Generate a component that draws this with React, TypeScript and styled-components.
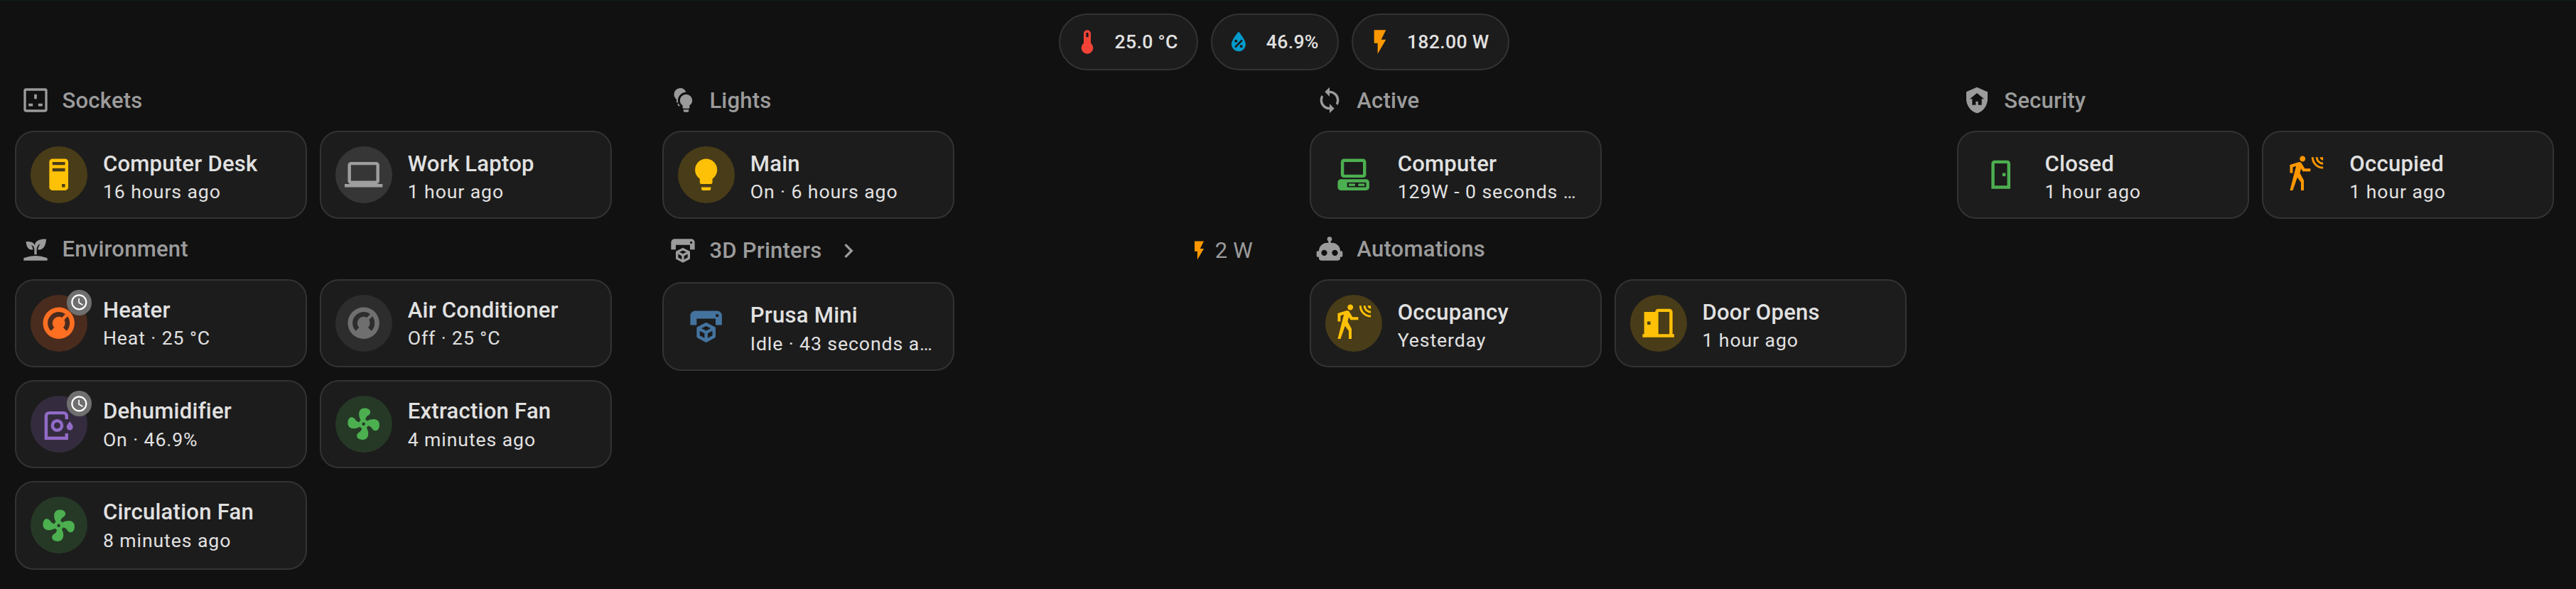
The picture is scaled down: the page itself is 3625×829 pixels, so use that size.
import React from "react";
import styled, { createGlobalStyle } from "styled-components";

const GlobalStyle = createGlobalStyle`
  * { box-sizing: border-box; }
  html, body { margin: 0; background: #111111; }
  body { font-family: Roboto, sans-serif; color: #e1e1e1; }
`;

const icons = {
  thermometer: "M15 13V5A3 3 0 0 0 9 5V13A5 5 0 1 0 15 13M12 4A1 1 0 0 1 13 5V8H11V5A1 1 0 0 1 12 4Z",
  waterPercent: "M12,3.25C12,3.25 6,10 6,14C6,17.32 8.69,20 12,20A6,6 0 0,0 18,14C18,10 12,3.25 12,3.25M14.47,9.97L15.53,11.03L9.53,17.03L8.47,15.97M9.75,10A1.25,1.25 0 0,1 11,11.25A1.25,1.25 0 0,1 9.75,12.5A1.25,1.25 0 0,1 8.5,11.25A1.25,1.25 0 0,1 9.75,10M14.25,14.5A1.25,1.25 0 0,1 15.5,15.75A1.25,1.25 0 0,1 14.25,17A1.25,1.25 0 0,1 13,15.75A1.25,1.25 0 0,1 14.25,14.5Z",
  flash: "M7,2V13H10V22L17,10H13L17,2H7Z",
  socket: "M4,2A2,2 0 0,0 2,4V20A2,2 0 0,0 4,22H20A2,2 0 0,0 22,20V4A2,2 0 0,0 20,2H4M4,4H20V20H4V4M10.9,7V11H13.1V7H10.9M6.1,14.8V17.1H9.7V14.8H6.1M14.3,14.8V17.1H17.9V14.8H14.3Z",
  tower: "M8,2H16A2,2 0 0,1 18,4V20A2,2 0 0,1 16,22H8A2,2 0 0,1 6,20V4A2,2 0 0,1 8,2M8,4V6H16V4H8M16,8H8V10H16V8M16,18H14V20H16V18Z",
  laptop: "M4,6H20V16H4M20,18A2,2 0 0,0 22,16V6C22,4.89 21.1,4 20,4H4C2.89,4 2,4.89 2,6V16A2,2 0 0,0 4,18H0V20H24V18H20Z",
  sprout: "M2,22V20C2,20 7,18 12,18C17,18 22,20 22,20V22H2M11.3,9.1C10.1,5.2 4,6.1 4,6.1C4,6.1 4.2,13.9 9.9,12.7C9.5,9.8 8,9 8,9C10.8,9 11,12.4 11,12.4V17C11.3,17 11.7,17 12,17C12.3,17 12.7,17 13,17V12.8C13,12.8 13,8.9 16,7.9C16,7.9 14,10.9 14,12.9C21,13.6 21,4 21,4C21,4 12.1,3 11.3,9.1Z",
  thermostat: "M16.95,16.95L14.83,14.83C15.55,14.1 16,13.1 16,12C16,11.26 15.79,10.57 15.43,10L17.6,7.81C18.5,9 19,10.43 19,12C19,13.93 18.22,15.68 16.95,16.95M12,5C13.57,5 15,5.5 16.19,6.4L14,8.56C13.43,8.21 12.74,8 12,8A4,4 0 0,0 8,12C8,13.1 8.45,14.1 9.17,14.83L7.05,16.95C5.78,15.68 5,13.93 5,12A7,7 0 0,1 12,5M12,2A10,10 0 0,0 2,12A10,10 0 0,0 12,22A10,10 0 0,0 22,12C22,6.47 17.5,2 12,2Z",
  dehumidifier: "M6,4A3,3 0 0,0 3,7V22H18V18H16V20H5V7A1,1 0 0,1 6,6H15A1,1 0 0,1 16,7V9H18V7A3,3 0 0,0 15,4H6M11,9A4,4 0 0,0 7,13A4,4 0 0,0 11,17A4,4 0 0,0 15,13A4,4 0 0,0 11,9M11,11A2,2 0 0,1 13,13A2,2 0 0,1 11,15A2,2 0 0,1 9,13A2,2 0 0,1 11,11M19,10.5C19,10.5 17,12.7 17,14A2,2 0 0,0 19,16A2,2 0 0,0 21,14C21,12.7 19,10.5 19,10.5Z",
  fan: "M12,11A1,1 0 0,0 11,12A1,1 0 0,0 12,13A1,1 0 0,0 13,12A1,1 0 0,0 12,11M12.5,2C17,2 17.11,5.57 14.75,6.75C13.76,7.24 13.32,8.29 13.13,9.22C13.61,9.42 14.03,9.73 14.35,10.13C18.05,8.13 22.03,8.92 22.03,12.5C22.03,17 18.46,17.1 17.28,14.73C16.78,13.74 15.72,13.3 14.79,13.11C14.59,13.59 14.28,14 13.88,14.34C15.87,18.03 15.08,22 11.5,22C7,22 6.91,18.42 9.27,17.24C10.25,16.75 10.69,15.71 10.89,14.79C10.4,14.59 9.97,14.27 9.65,13.87C5.96,15.85 2,15.07 2,11.5C2,7 5.56,6.89 6.74,9.26C7.24,10.25 8.29,10.68 9.22,10.87C9.41,10.39 9.73,9.97 10.14,9.65C8.15,5.96 8.94,2 12.5,2Z",
  clock: "M12,20A8,8 0 0,0 20,12A8,8 0 0,0 12,4A8,8 0 0,0 4,12A8,8 0 0,0 12,20M12,2A10,10 0 0,1 22,12A10,10 0 0,1 12,22C6.47,22 2,17.5 2,12A10,10 0 0,1 12,2M12.5,7V12.25L17,14.92L16.25,16.15L11,13V7H12.5Z",
  bulbs: "M14.7,7A5.2,5.2 0 0,0 9.5,12.2C9.5,14 10.4,15.6 11.8,16.5V18.3A0.7,0.7 0 0,0 12.5,19H16.9A0.7,0.7 0 0,0 17.6,18.3V16.5C19,15.6 19.9,14 19.9,12.2A5.2,5.2 0 0,0 14.7,7M12.5,20V21.3A0.7,0.7 0 0,0 13.2,22H16.2A0.7,0.7 0 0,0 16.9,21.3V20H12.5M9.7,1.8A5.2,5.2 0 0,0 4.5,7C4.5,8.8 5.3,10.3 6.6,11.3V14H8A6.9,6.9 0 0,1 14.6,5.3A5.2,5.2 0 0,0 9.7,1.8M7.6,14.8H8.3Q8.8,15.9 9.5,16.6V16.9H8.4Q7.6,16.7 7.6,15.9Z",
  bulb: "M12,2A7,7 0 0,0 5,9C5,11.38 6.19,13.47 8,14.74V17A1,1 0 0,0 9,18H15A1,1 0 0,0 16,17V14.74C17.81,13.47 19,11.38 19,9A7,7 0 0,0 12,2M9,21A1,1 0 0,0 10,22H14A1,1 0 0,0 15,21V20H9V21Z",
  printer: "M19,6A1,1 0 0,0 20,5A1,1 0 0,0 19,4A1,1 0 0,0 18,5A1,1 0 0,0 19,6M19,2A3,3 0 0,1 22,5V11H18V7H6V11H2V5A3,3 0 0,1 5,2H19M18,18.25C18,18.63 17.79,18.96 17.47,19.13L12.57,21.82C12.4,21.94 12.21,22 12,22C11.79,22 11.59,21.94 11.43,21.82L6.53,19.13C6.21,18.96 6,18.63 6,18.25V13C6,12.62 6.21,12.29 6.53,12.12L11.43,9.68C11.59,9.56 11.79,9.5 12,9.5C12.21,9.5 12.4,9.56 12.57,9.68L17.47,12.12C17.79,12.29 18,12.62 18,13V18.25M12,11.65L9.04,13L12,14.6L14.96,13L12,11.65M8,17.66L11,19.29V16.33L8,14.71V17.66M16,17.66V14.71L13,16.33V19.29L16,17.66Z",
  chevron: "M8.59,16.58L13.17,12L8.59,7.41L10,6L16,12L10,18L8.59,16.58Z",
  sync: "M12,18A6,6 0 0,1 6,12C6,11 6.25,10.03 6.7,9.2L5.24,7.74C4.46,8.97 4,10.43 4,12A8,8 0 0,0 12,20V23L16,19L12,15M12,4V1L8,5L12,9V6A6,6 0 0,1 18,12C18,13 17.75,13.97 17.3,14.8L18.76,16.26C19.54,15.03 20,13.57 20,12A8,8 0 0,0 12,4Z",
  desktop: "M6,2C4.89,2 4,2.89 4,4V12C4,13.11 4.89,14 6,14H18C19.11,14 20,13.11 20,12V4C20,2.89 19.11,2 18,2H6M6,4H18V12H6V4M4,15C2.89,15 2,15.89 2,17V20C2,21.11 2.89,22 4,22H20C21.11,22 22,21.11 22,20V17C22,15.89 21.11,15 20,15H4M8,17H20V20H8V17M9,17.75V19.25H13V17.75H9M15,17.75V19.25H19V17.75H15Z",
  robot: "M12,2A2,2 0 0,1 14,4C14,4.74 13.6,5.39 13,5.73V7H14A7,7 0 0,1 21,14H22A1,1 0 0,1 23,15V18A1,1 0 0,1 22,19H21V20A2,2 0 0,1 19,22H5A2,2 0 0,1 3,20V19H2A1,1 0 0,1 1,18V15A1,1 0 0,1 2,14H3A7,7 0 0,1 10,7H11V5.73C10.4,5.39 10,4.74 10,4A2,2 0 0,1 12,2M7.5,13A2.5,2.5 0 0,0 5,15.5A2.5,2.5 0 0,0 7.5,18A2.5,2.5 0 0,0 10,15.5A2.5,2.5 0 0,0 7.5,13M16.5,13A2.5,2.5 0 0,0 14,15.5A2.5,2.5 0 0,0 16.5,18A2.5,2.5 0 0,0 19,15.5A2.5,2.5 0 0,0 16.5,13Z",
  motion: "M10,0.2C9,0.2 8.2,1 8.2,2C8.2,3 9,3.8 10,3.8C11,3.8 11.8,3 11.8,2C11.8,1 11,0.2 10,0.2M15.67,1A7.33,7.33 0 0,0 23,8.33V7A6,6 0 0,1 17,1H15.67M18.33,1C18.33,3.58 20.42,5.67 23,5.67V4.33C21.16,4.33 19.67,2.84 19.67,1H18.33M21,1A2,2 0 0,0 23,3V1H21M7.92,4.03C7.75,4.03 7.58,4.06 7.42,4.11L2,5.8V11H3.8V7.33L5.91,6.67L2,22H3.8L6.67,13.89L9,17V22H10.8V15.59L8.31,11.05L9.04,8.18L10.12,10H15V8.2H11.38L9.38,4.87C9.08,4.37 8.54,4.03 7.92,4.03Z",
  doorOpen: "M12,3C10.89,3 10,3.89 10,5H3V19H2V21H22V19H21V5C21,3.89 20.11,3 19,3H12M12,5H19V19H12V5M5,11H7V13H5V11Z",
  door: "M8,3C6.89,3 6,3.89 6,5V21H18V5C18,3.89 17.11,3 16,3H8M8,5H16V19H8V5M13,11V13H15V11H13Z",
  shieldHome: "M11,13H13V16H16V11H18L12,6L6,11H8V16H11V13M12,1L21,5V11C21,16.55 17.16,21.74 12,23C6.84,21.74 3,16.55 3,11V5L12,1Z",
};
type IconName = keyof typeof icons;

const Svg = styled.svg<{ $size: number; $color?: string }>`
  display: block;
  flex: none;
  width: ${(p) => p.$size}px;
  height: ${(p) => p.$size}px;
  fill: ${(p) => p.$color ?? "currentColor"};
`;

function Icon({ name, size, color }: { name: IconName; size: number; color?: string }) {
  return (
    <Svg viewBox="0 0 24 24" $size={size} $color={color} aria-hidden>
      <path fillRule="evenodd" d={icons[name]} />
    </Svg>
  );
}

const Page = styled.div`
  min-height: 829px;
  background: #111111;
  border-top: 1px solid #101e22;
`;

const Badges = styled.header`
  display: flex;
  justify-content: center;
  gap: 17.8px;
  padding: 18px 11px 0 0;
`;

const Badge = styled.div`
  display: flex;
  align-items: center;
  gap: 18.4px;
  height: 80px;
  padding: 0 26.1px 0 17.8px;
  border: 2px solid #333333;
  border-radius: 40px;
  background: #1c1c1c;
  font-size: 26.67px;
  font-weight: 500;
  letter-spacing: 0.3px;
  white-space: nowrap;
`;

const Columns = styled.main`
  display: grid;
  grid-template-columns: repeat(4, 839.8px);
  column-gap: 71.1px;
  padding: 18.2px 0 0 21.3px;
`;

const Column = styled.section`
  display: flex;
  flex-direction: column;
  gap: 17.8px;
`;

const Heading = styled.h2<{ $tall?: boolean }>`
  display: flex;
  align-items: center;
  gap: 17.8px;
  height: ${(p) => (p.$tall ? 53.3 : 48.9)}px;
  margin: 0;
  padding: 0 8.9px ${(p) => (p.$tall ? 0 : 0.6)}px 8.4px;
  color: #9b9b9b;
  font-size: 31.1px;
  font-weight: 500;
  letter-spacing: 0.2px;
`;

const HeadingState = styled.span`
  display: flex;
  align-items: center;
  gap: 6.7px;
  margin-left: auto;
  font-weight: 400;
`;

const Tiles = styled.div`
  display: grid;
  grid-template-columns: repeat(2, 1fr);
  gap: 17.8px;
`;

const TileCard = styled.article`
  display: flex;
  align-items: center;
  gap: 21.8px;
  height: 124.4px;
  padding: 0 20.8px 0 19.8px;
  border: 2px solid #333333;
  border-radius: 26.7px;
  background: #1c1c1c;
  min-width: 0;
`;

const IconDisc = styled.div<{ $color: string; $fill: string }>`
  position: relative;
  flex: none;
  display: grid;
  place-items: center;
  width: 80px;
  height: 80px;
  border-radius: 50%;
  color: ${(p) => p.$color};
  background: ${(p) => p.$fill};
`;

const ClockBadge = styled.span`
  position: absolute;
  top: -7px;
  right: -6.2px;
  display: grid;
  place-items: center;
  width: 35.6px;
  height: 35.6px;
  border-radius: 50%;
  color: #ffffff;
  background: #6f6f6f;
`;

const Info = styled.div<{ $raised?: boolean }>`
  min-width: 0;
  flex: 1;
  padding-top: ${(p) => (p.$raised ? 0 : 5.6)}px;
`;

const Name = styled.div`
  overflow: hidden;
  text-overflow: ellipsis;
  white-space: nowrap;
  font-size: 31.1px;
  line-height: 44.4px;
  font-weight: 500;
  letter-spacing: 0.22px;
`;

const State = styled(Name)`
  font-size: 26.67px;
  line-height: 35.6px;
  font-weight: 400;
  letter-spacing: 0.89px;
`;

type TileProps = {
  icon: IconName;
  name: string;
  state: string;
  color: string;
  fill?: string;
  clock?: boolean;
  raised?: boolean;
};

function Tile({ icon, name, state, color, fill = "transparent", clock, raised }: TileProps) {
  return (
    <TileCard>
      <IconDisc $color={color} $fill={fill}>
        <Icon name={icon} size={53.33} />
        {clock && (
          <ClockBadge>
            <Icon name="clock" size={26.67} />
          </ClockBadge>
        )}
      </IconDisc>
      <Info $raised={raised}>
        <Name>{name}</Name>
        <State>{state}</State>
      </Info>
    </TileCard>
  );
}

const amber = { color: "#ffc107", fill: "#493c18" };
const green = { color: "#4caf50", fill: "#263926" };

export default function App() {
  return (
    <Page>
      <GlobalStyle />
      <Badges>
        <Badge><Icon name="thermometer" size={40} color="#f44336" />25.0 °C</Badge>
        <Badge><Icon name="waterPercent" size={40} color="#039bcb" />46.9%</Badge>
        <Badge><Icon name="flash" size={40} color="#ff9800" />182.00 W</Badge>
      </Badges>
      <Columns>
        <Column>
          <Heading><Icon name="socket" size={40} />Sockets</Heading>
          <Tiles>
            <Tile icon="tower" name="Computer Desk" state="16 hours ago" {...amber} />
            <Tile icon="laptop" name="Work Laptop" state="1 hour ago" color="#9e9e9e" fill="#363636" />
          </Tiles>
          <Heading><Icon name="sprout" size={40} />Environment</Heading>
          <Tiles>
            <Tile raised icon="thermostat" name="Heater" state="Heat · 25 °C" color="#ff6f22" fill="#4a2c1e" clock />
            <Tile raised icon="thermostat" name="Air Conditioner" state="Off · 25 °C" color="#6f6f6f" fill="#2d2d2d" />
            <Tile raised icon="dehumidifier" name="Dehumidifier" state="On · 46.9%" color="#926bc7" fill="#342c3e" clock />
            <Tile raised icon="fan" name="Extraction Fan" state="4 minutes ago" {...green} />
            <Tile raised icon="fan" name="Circulation Fan" state="8 minutes ago" {...green} />
          </Tiles>
        </Column>
        <Column>
          <Heading><Icon name="bulbs" size={40} />Lights</Heading>
          <Tiles>
            <Tile icon="bulb" name="Main" state="On · 6 hours ago" {...amber} />
          </Tiles>
          <Heading $tall>
            <Icon name="printer" size={40} />3D Printers
            <Icon name="chevron" size={40} />
            <HeadingState><Icon name="flash" size={31.1} color="#ff9800" />2 W</HeadingState>
          </Heading>
          <Tiles>
            <Tile icon="printer" name="Prusa Mini" state="Idle · 43 seconds ago" color="#44739e" />
          </Tiles>
        </Column>
        <Column>
          <Heading><Icon name="sync" size={40} />Active</Heading>
          <Tiles>
            <Tile icon="desktop" name="Computer" state="129W - 0 seconds ago" color="#4caf50" />
          </Tiles>
          <Heading><Icon name="robot" size={40} />Automations</Heading>
          <Tiles>
            <Tile icon="motion" name="Occupancy" state="Yesterday" {...amber} />
            <Tile icon="doorOpen" name="Door Opens" state="1 hour ago" {...amber} />
          </Tiles>
        </Column>
        <Column>
          <Heading><Icon name="shieldHome" size={40} />Security</Heading>
          <Tiles>
            <Tile icon="door" name="Closed" state="1 hour ago" color="#4caf50" />
            <Tile icon="motion" name="Occupied" state="1 hour ago" color="#ff9800" />
          </Tiles>
        </Column>
      </Columns>
    </Page>
  );
}
